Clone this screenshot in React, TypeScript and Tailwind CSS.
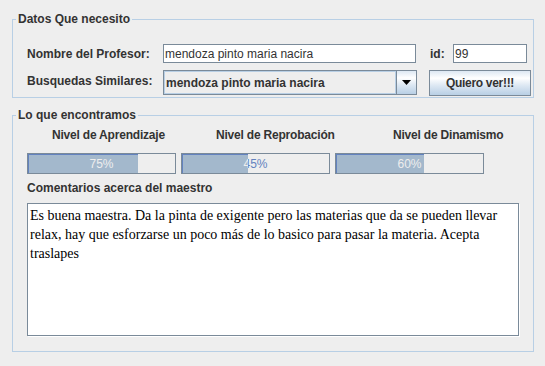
const bars = [
  { label: 'Nivel de Aprendizaje', value: 75 },
  { label: 'Nivel de Reprobación', value: 45 },
  { label: 'Nivel de Dinamismo', value: 60 },
]

function ProgressBar({ value }: { value: number }) {
  // inner width of the bar is 147px
  const fill = Math.round((147 * value) / 100)
  return (
    <div className="relative h-[21px] w-[149px] border border-[#7a8a99] bg-[#eeeeee]">
      <div className="absolute inset-0 flex items-center justify-center text-[12px] text-[#6382bf]">
        {value}%
      </div>
      <div
        className="absolute top-0 left-0 h-full overflow-hidden border-t border-l border-[#6382bf] bg-[#a3b8cc]"
        style={{ width: fill }}
      >
        <div className="absolute top-[-1px] left-[-1px] flex h-[19px] w-[147px] items-center justify-center text-[12px] text-[#eeeeee]">
          {value}%
        </div>
      </div>
    </div>
  )
}

export default function App() {
  return (
    <div className="h-[366px] w-[545px] bg-[#eeeeee] pt-[12px] pl-[12px] font-['Liberation_Sans',Arial,sans-serif] text-[#333333]">
      <fieldset className="m-0 w-[522px] border border-[#b8cfe5] p-0">
        <legend className="ml-[3px] px-[2px] text-[12px] leading-[15px] font-bold">
          Datos Que necesito
        </legend>
        <div className="flex flex-col gap-[7px] pt-[17px] pb-[1px] pl-[14px]">
          <div className="flex items-center">
            <span className="w-[136px] text-[12px] font-bold">Nombre del Profesor:</span>
            <div className="flex h-[19px] w-[253px] items-center border border-[#7a8a99] bg-white pl-[1px] text-[12px]">
              mendoza pinto maria nacira
            </div>
            <span className="ml-[14px] w-[23px] text-[12px] font-bold">id:</span>
            <div className="flex h-[19px] w-[74px] items-center border border-[#7a8a99] bg-white pl-[1px] text-[12px]">
              99
            </div>
          </div>
          <div className="flex items-start">
            <span className="w-[136px] pt-[4px] text-[12px] leading-[15px] font-bold">
              Busquedas Similares:
            </span>
            <div className="flex h-[25px] w-[254px] border border-[#7a8a99]">
              <div className="flex flex-1 items-center border border-[#b8cfe5] bg-[#eeeeee] pl-[1px] text-[12px] font-bold">
                mendoza pinto maria nacira
              </div>
              <div className="flex w-[20px] items-center justify-center border-l border-[#7a8a99] bg-[linear-gradient(to_bottom,#dde8f3,#ffffff_30%,#dde8f3_60%,#b8cfe5)]">
                <svg width="9" height="5" viewBox="0 0 9 5">
                  <path d="M0 0H9L4.5 5Z" fill="#000" />
                </svg>
              </div>
            </div>
            <button className="ml-[12px] flex h-[26px] w-[102px] items-center justify-center border border-[#7a8a99] bg-[linear-gradient(to_bottom,#dde8f3,#ffffff_30%,#dde8f3_60%,#b8cfe5)] text-[12px] font-bold tracking-[-0.3px] text-[#333333]">
              Quiero ver!!!
            </button>
          </div>
        </div>
      </fieldset>

      <fieldset className="m-0 mt-[10px] w-[522px] border border-[#b8cfe5] p-0">
        <legend className="ml-[3px] px-[2px] text-[12px] leading-[15px] font-bold">
          Lo que encontramos
        </legend>
        <div className="flex flex-col pt-[5px] pb-[15px] pl-[14px]">
          <div className="flex pl-[25px] text-[12px] leading-[15px] font-bold tracking-[-0.2px]">
            <span className="w-[164px]">{bars[0].label}</span>
            <span className="w-[177px]">{bars[1].label}</span>
            <span>{bars[2].label}</span>
          </div>
          <div className="mt-[10px] flex gap-[5px]">
            {bars.map((b) => (
              <ProgressBar key={b.label} value={b.value} />
            ))}
          </div>
          <span className="mt-[7px] text-[12px] leading-[15px] font-bold">
            Comentarios acerca del maestro
          </span>
          <div className="mt-[7px] h-[133px] w-[492px] border border-[#7a8a99] bg-white px-[2px] pt-[2px] font-['Liberation_Serif','Times_New_Roman',serif] text-[14px] leading-[19px] whitespace-nowrap text-black shadow-[1px_1px_0_#ffffff]">
            Es buena maestra. Da la pinta de exigente pero las materias que da se pueden llevar
            <br />
            relax, hay que esforzarse un poco más de lo basico para pasar la materia. Acepta
            <br />
            traslapes
          </div>
        </div>
      </fieldset>
    </div>
  )
}
